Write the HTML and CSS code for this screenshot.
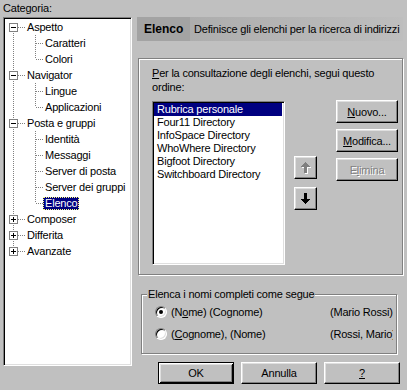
FILE: index.html
```html
<!DOCTYPE html>
<html lang="it">
<head>
  <meta charset="UTF-8">
  <title>Preferenze</title>
  <link rel="stylesheet" href="styles.css">
</head>
<body>

  <div class="dialog">
    <div class="side">
      <div class="side-title">Categoria:</div>
      <div class="tree">
        <ul class="trunk">
          <li>
            <div class="node"><span class="box minus"></span><span class="twig"></span><span class="label">Aspetto</span></div>
            <ul class="kids">
              <li class="leaf"><span class="twig"></span><span class="label">Caratteri</span></li>
              <li class="leaf"><span class="twig"></span><span class="label">Colori</span></li>
            </ul>
          </li>
          <li>
            <div class="node"><span class="box minus"></span><span class="twig"></span><span class="label">Navigator</span></div>
            <ul class="kids">
              <li class="leaf"><span class="twig"></span><span class="label">Lingue</span></li>
              <li class="leaf"><span class="twig"></span><span class="label">Applicazioni</span></li>
            </ul>
          </li>
          <li>
            <div class="node"><span class="box minus"></span><span class="twig"></span><span class="label">Posta e gruppi</span></div>
            <ul class="kids">
              <li class="leaf"><span class="twig"></span><span class="label">Identità</span></li>
              <li class="leaf"><span class="twig"></span><span class="label">Messaggi</span></li>
              <li class="leaf"><span class="twig"></span><span class="label">Server di posta</span></li>
              <li class="leaf"><span class="twig"></span><span class="label">Server dei gruppi</span></li>
              <li class="leaf"><span class="twig"></span><span class="label selected">Elenco</span></li>
            </ul>
          </li>
          <li>
            <div class="node"><span class="box plus"></span><span class="twig"></span><span class="label">Composer</span></div>
          </li>
          <li>
            <div class="node"><span class="box plus"></span><span class="twig"></span><span class="label">Differita</span></div>
          </li>
          <li>
            <div class="node"><span class="box plus"></span><span class="twig"></span><span class="label">Avanzate</span></div>
          </li>
        </ul>
      </div>
    </div>

    <div class="main">
      <div class="banner">
        <div class="banner-name">Elenco</div>
        <div class="banner-desc">Definisce gli elenchi per la ricerca di indirizzi</div>
      </div>

      <div class="frame">
        <div class="intro"><u>P</u>er la consultazione degli elenchi, segui questo ordine:</div>
        <div class="lists">
          <ul class="listbox">
            <li class="selected">Rubrica personale</li>
            <li>Four11 Directory</li>
            <li>InfoSpace Directory</li>
            <li>WhoWhere Directory</li>
            <li>Bigfoot Directory</li>
            <li>Switchboard Directory</li>
          </ul>
          <div class="arrows">
            <button class="btn arrow" disabled>
              <svg width="10" height="12" viewBox="0 0 10 12" shape-rendering="crispEdges">
                <polygon points="5.5,1 10,6 7,6 7,12 4,12 4,6 1,6" fill="#fff"/>
                <polygon points="4.5,0 9,5 6,5 6,11 3,11 3,5 0,5" fill="#808080"/>
              </svg>
            </button>
            <button class="btn arrow">
              <svg width="9" height="11" viewBox="0 0 9 11" shape-rendering="crispEdges">
                <polygon points="3,0 6,0 6,6 9,6 4.5,11 0,6 3,6" fill="#000"/>
              </svg>
            </button>
          </div>
          <div class="actions">
            <button class="btn"><u>N</u>uovo...</button>
            <button class="btn"><u>M</u>odifica...</button>
            <button class="btn" disabled>E<u>l</u>imina</button>
          </div>
        </div>
      </div>

      <fieldset class="group">
        <legend>Elenca i nomi completi come segue</legend>
        <div class="opt">
          <span class="radio checked"></span>
          <span class="opt-label">(N<u>o</u>me) (Cognome)</span>
          <span class="opt-sample">(Mario Rossi)</span>
        </div>
        <div class="opt">
          <span class="radio"></span>
          <span class="opt-label">(<u>C</u>ognome), (Nome)</span>
          <span class="opt-sample">(Rossi, Mario)</span>
        </div>
      </fieldset>

      <div class="footer">
        <button class="btn wide default">OK</button>
        <button class="btn wide">Annulla</button>
        <button class="btn wide"><u>?</u></button>
      </div>
    </div>
  </div>

</body>
</html>
```

FILE: styles.css
```css
html, body {
  margin: 0;
  padding: 0;
  background: #c0c0c0;
  font-family: "Liberation Sans", Arial, sans-serif;
  font-size: 11px;
  letter-spacing: -0.2px;
  color: #000;
}

ul {
  list-style: none;
  margin: 0;
  padding: 0;
}

u {
  text-decoration-thickness: 1px;
  text-underline-offset: 1px;
}

.dialog {
  display: flex;
  gap: 5px;
  padding: 2px 3px 0 3px;
  width: 407px;
  height: 390px;
  box-sizing: border-box;
}

/* left: category tree */

.side {
  width: 129px;
}

.side-title {
  height: 15px;
  line-height: 13px;
}

.tree {
  height: 349px;
  box-sizing: border-box;
  background: #fff;
  border: 1px solid;
  border-color: #808080 #fff #fff #808080;
  box-shadow: inset 1px 1px 0 #000, inset -1px -1px 0 #dfdfdf;
  padding: 1px;
}

.trunk {
  background: repeating-linear-gradient(to bottom, #808080 0 1px, transparent 1px 2px) 8px 8px / 1px calc(100% - 16px) no-repeat;
}

.kids {
  background: repeating-linear-gradient(to bottom, #808080 0 1px, transparent 1px 2px) 30px 0 / 1px calc(100% - 8px) no-repeat;
}

.node, .leaf {
  display: flex;
  align-items: center;
  height: 16px;
}

.node {
  padding-left: 4px;
}

.leaf {
  padding-left: 31px;
}

.box {
  width: 9px;
  height: 9px;
  box-sizing: border-box;
  border: 1px solid #808080;
  background: #fff;
  display: flex;
  align-items: center;
  justify-content: center;
  position: relative;
}

.box::before {
  content: "";
  width: 5px;
  height: 1px;
  background: #000;
}

.box.plus::after {
  content: "";
  position: absolute;
  left: 3px;
  top: 1px;
  width: 1px;
  height: 5px;
  background: #000;
}

.twig {
  width: 7px;
  height: 0;
  border-top: 1px dotted #808080;
}

.label {
  padding: 0 1px;
  border: 1px solid transparent;
  line-height: 11px;
  white-space: nowrap;
}

.label.selected {
  background: #000080;
  color: #fff;
  border: 1px dotted #ffff80;
}

/* right: panel */

.main {
  width: 267px;
  padding-top: 15px;
}

.banner {
  display: flex;
  height: 24px;
  line-height: 24px;
  width: 266px;
}

.banner-name {
  width: 53px;
  padding-left: 7px;
  box-sizing: border-box;
  background: #a3a3a3;
  font-weight: bold;
  font-size: 12px;
  letter-spacing: 0;
}

.banner-desc {
  flex: 1;
  padding-left: 4px;
  background: linear-gradient(to right, #adadad, #bebebe);
  white-space: nowrap;
  overflow: hidden;
}

.frame {
  margin: 17px 0 0 1px;
  width: 265px;
  height: 217px;
  box-sizing: border-box;
  border: 1px solid #808080;
  box-shadow: inset 1px 1px 0 #fff, 1px 1px 0 #fff;
  padding: 7px 4px 0 13px;
}

.intro {
  line-height: 14px;
  width: 240px;
  margin-bottom: 7px;
}

.lists {
  display: flex;
  align-items: flex-start;
}

.listbox {
  width: 133px;
  height: 164px;
  box-sizing: border-box;
  background: #fff;
  border: 1px solid;
  border-color: #808080 #fff #fff #808080;
  box-shadow: inset 1px 1px 0 #000, inset -1px -1px 0 #dfdfdf;
  padding: 1px 2px 1px 1px;
}

.listbox li {
  height: 13px;
  line-height: 13px;
  padding-left: 3px;
  white-space: nowrap;
}

.listbox li.selected {
  background: #000080;
  color: #fff;
}

.btn {
  font-family: inherit;
  font-size: 11px;
  letter-spacing: -0.2px;
  color: #000;
  background: #c0c0c0;
  border: 1px solid;
  border-color: #fff #000 #000 #fff;
  box-shadow: inset -1px -1px 0 #808080, inset 1px 1px 0 #dfdfdf;
  border-radius: 0;
  padding: 0;
  margin: 0;
  display: flex;
  align-items: center;
  justify-content: center;
}

.btn:disabled {
  color: #808080;
  text-shadow: 1px 1px 0 #fff;
}

.arrows {
  display: flex;
  flex-direction: column;
  gap: 8px;
  margin-left: 9px;
  padding-top: 55px;
}

.arrow {
  width: 23px;
  height: 23px;
}

.actions {
  display: flex;
  flex-direction: column;
  gap: 6px;
  margin: -1px 0 0 19px;
}

.actions .btn {
  width: 62px;
  height: 23px;
}

.group {
  margin: 13px 0 0 4px;
  width: 256px;
  height: 66px;
  box-sizing: border-box;
  border: 1px solid #808080;
  box-shadow: inset 1px 1px 0 #fff, 1px 1px 0 #fff;
  padding: 0;
}

.group legend {
  margin-left: 5px;
  padding: 0 1px;
  background: #c0c0c0;
  line-height: 13px;
}

.opt {
  display: flex;
  align-items: center;
  height: 22px;
  padding-left: 13px;
}

.radio {
  width: 12px;
  height: 12px;
  box-sizing: border-box;
  border-radius: 50%;
  border: 1px solid;
  border-color: #808080 #fff #fff #808080;
  box-shadow: inset 1px 1px 0 #000, inset -1px -1px 0 #dfdfdf;
  background: #fff;
  display: flex;
  align-items: center;
  justify-content: center;
}

.radio.checked::after {
  content: "";
  width: 4px;
  height: 4px;
  border-radius: 50%;
  background: #000;
}

.opt-label {
  width: 163px;
  padding-left: 4px;
  box-sizing: border-box;
}

.opt-sample {
  width: 63px;
  overflow: hidden;
  white-space: nowrap;
}

.footer {
  display: flex;
  justify-content: flex-end;
  gap: 7px;
  margin-top: 8px;
  width: 263px;
}

.btn.wide {
  width: 76px;
  height: 22px;
}

.btn.default {
  border-color: #000;
  box-shadow: inset 1px 1px 0 #fff, inset -1px -1px 0 #000, inset 2px 2px 0 #dfdfdf, inset -2px -2px 0 #808080;
}
```
